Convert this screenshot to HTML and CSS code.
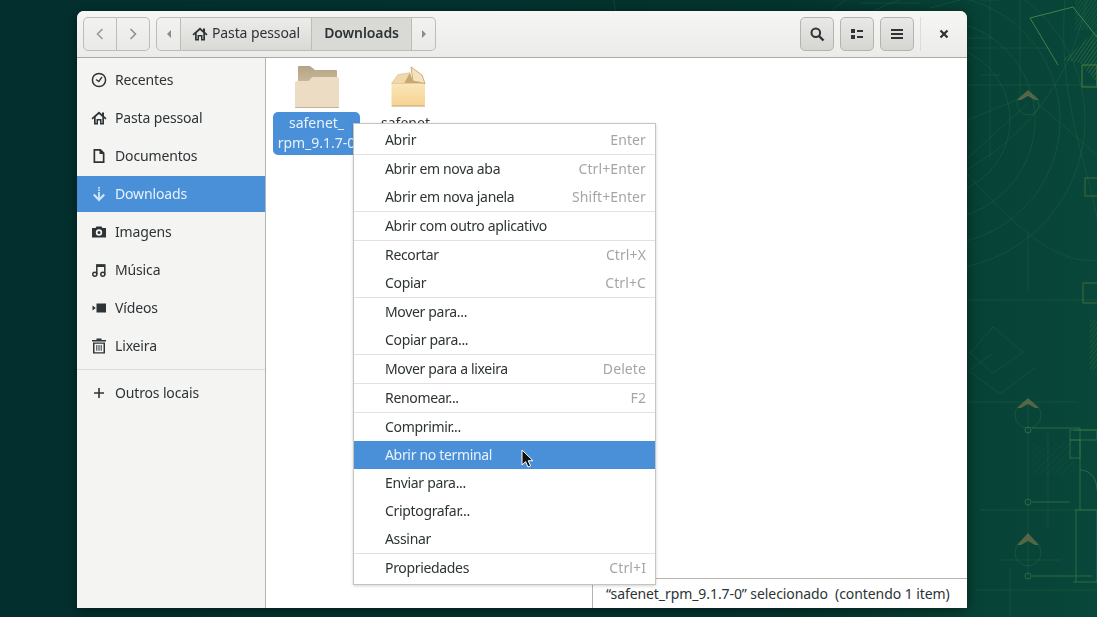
FILE: index.html
```html
<!DOCTYPE html>
<html lang="pt">
<head>
<meta charset="utf-8">
<title>Downloads</title>
<link rel="stylesheet" href="styles.css">
</head>
<body>
<svg class="wallpaper" viewBox="0 0 1097 617" aria-hidden="true">
  <defs>
    <linearGradient id="bg" x1="0" x2="1" y1="0" y2="0">
      <stop offset="0" stop-color="#03302f"/>
      <stop offset=".72" stop-color="#04352f"/>
      <stop offset=".88" stop-color="#074236"/>
      <stop offset="1" stop-color="#09473a"/>
    </linearGradient>
    <linearGradient id="folderBack" x1="0" x2="0" y1="0" y2="1">
      <stop offset="0" stop-color="#b5a484"/>
      <stop offset="1" stop-color="#c9b99b"/>
    </linearGradient>
    <linearGradient id="boxBody" x1="0" x2="0" y1="0" y2="1">
      <stop offset="0" stop-color="#fbe6b8"/>
      <stop offset="1" stop-color="#f6d392"/>
    </linearGradient>
    <pattern id="hatch" width="3" height="3" patternUnits="userSpaceOnUse" patternTransform="rotate(35)">
      <line x1="0" y1="0" x2="0" y2="3" stroke="#5a9a50" stroke-width=".9"/>
    </pattern>
    <pattern id="hatch2" width="5" height="5" patternUnits="userSpaceOnUse" patternTransform="rotate(45)">
      <line x1="0" y1="0" x2="0" y2="5" stroke="#2f6f50" stroke-width=".8"/>
    </pattern>
  </defs>
  <rect width="1097" height="617" fill="url(#bg)"/>
  <g class="blueprint">
    <g fill="none" stroke="#2e7a50" stroke-width=".7" opacity=".4">
      <circle cx="935" cy="120" r="75"/>
      <circle cx="935" cy="120" r="100"/>
      <circle cx="935" cy="120" r="125"/>
      <circle cx="935" cy="120" r="150"/>
      <circle cx="850" cy="-40" r="240"/>
      <path d="M968 48h30M968 38h25M980 75h20M1000 48h50"/>
      <path d="M968 85h130M990 0v160M1020 0v100M968 120l60-25M1028 95l69 60M968 158l60-55"/>
      <path d="M1000 0h-20M930 8l30-8M860 3h60"/>
    </g>
    <g fill="none" stroke="#4f9a50" stroke-width="1" opacity=".75">
      <path d="M1030 18l43-11 24 30M1030 18l28 47"/>
      <path d="M1063 60l34-30v53l-17-20z" fill="url(#hatch)" stroke="none"/>
      <path d="M1082 65h15v22h-15z" stroke="#6c8a3c"/>
    </g>
    <g fill="none" stroke="#2e7a50" stroke-width=".7" opacity=".38">
      <path d="M993 327l30 25-30 21-23-20zM970 370l23-17M1036 367l-36 27-30-22"/>
      <path d="M968 300h129M968 402h110M980 510h117M1028 232v60M1028 400v176"/>
      <path d="M975 590h122M1010 617v-50M1000 560h60M1048 430v100"/>
      <path d="M1065 0c-10 120 40 200 32 240M968 175c50 55 90 90 129 85"/>
    </g>
    <g fill="none" stroke="#4f8d4e" stroke-width=".8" opacity=".65">
      <rect x="1083" y="283" width="20" height="20" stroke="#7d8540"/>
      <rect x="1085" y="178" width="15" height="18" stroke="#7d8540"/>
      <circle cx="1028" cy="430" r="3"/><circle cx="1028" cy="502" r="3"/><circle cx="1028" cy="576" r="3"/>
      <path d="M1032 428h48v82M1032 502h38M1032 576h60M1074 430h23M1080 470c10 0 17 8 17 20M1075 510h22v72h-24M1076 510v72"/>
      <rect x="1070" y="430" width="27" height="10"/>
      <rect x="1070" y="440" width="10" height="18"/>
    </g>
    <rect x="1032" y="443" width="42" height="32" fill="url(#hatch2)" opacity=".35"/>
    <rect x="1075" y="0" width="22" height="30" fill="url(#hatch)" opacity=".4"/>
    <rect x="1090" y="320" width="7" height="50" fill="url(#hatch)" opacity=".45"/>
    <g fill="#8a7a50" opacity=".6">
      <path d="M1017 408l11-10 11 10-4 0-7-4-7 4z"/>
      <path d="M1017 545l11-12 11 12-4 0-7-4-7 4z"/>
      <path d="M1017 100l11-10 11 10-4 0-7-4-7 4z"/>
    </g>
    <g fill="none" stroke="#3d7a4a" stroke-width=".7" opacity=".45">
      <circle cx="1028" cy="415" r="13"/>
      <circle cx="1028" cy="553" r="13"/>
      <circle cx="1028" cy="104" r="11"/>
    </g>
  </g>
</svg>

<main class="window">
  <header class="headerbar">
    <div class="btn-group nav-group">
      <button class="hb-btn nav-btn"><svg viewBox="0 0 16 16" class="ico-16"><path d="M10.500 3L5.500 8l5 5" fill="none" stroke="#9a9a98" stroke-width="1.600"/></svg></button>
      <button class="hb-btn nav-btn"><svg viewBox="0 0 16 16" class="ico-16"><path d="M5.500 3l5 5-5 5" fill="none" stroke="#8f8f8d" stroke-width="1.600"/></svg></button>
    </div>
    <div class="btn-group path-group">
      <button class="hb-btn arrow-btn"><svg viewBox="0 0 16 16" class="ico-16"><path d="M10 4v8L6 8z" fill="#8b8b89"/></svg></button>
      <button class="hb-btn crumb"><svg viewBox="0 0 16 16" class="ico-16"><path d="M8 1.500L.500 8.300l1 1.100L3 8.200V14.500h4V10.500h2v4h4V8.200l1.500 1.200 1-1.100-2.500-2.300V2.500h-2v1.800zM4.700 12.900V6.900L8 3.900l3.300 3v6H10.500V9h-5v3.900z" fill="#2e3436" fill-rule="evenodd"/></svg><span>Pasta pessoal</span></button>
      <button class="hb-btn crumb crumb-active"><span>Downloads</span></button>
      <button class="hb-btn arrow-btn arrow-end"><svg viewBox="0 0 16 16" class="ico-16"><path d="M6 4v8l4-4z" fill="#8b8b89"/></svg></button>
    </div>
    <div class="hb-spacer"></div>
    <button class="hb-btn tool-btn"><svg viewBox="0 0 16 16" class="ico-16"><circle cx="6.800" cy="6.800" r="4.300" fill="none" stroke="#2e3436" stroke-width="2"/><path d="M10 10l4.500 4.500" stroke="#2e3436" stroke-width="2.400"/></svg></button>
    <button class="hb-btn tool-btn"><svg viewBox="0 0 16 16" class="ico-16"><path d="M2 3h4v4H2zM2 9h4v4H2zM8 4h6v2H8zM8 10h6v2H8z" fill="#2e3436"/></svg></button>
    <button class="hb-btn tool-btn"><svg viewBox="0 0 16 16" class="ico-16"><path d="M2 3h12v2H2zM2 7h12v2H2zM2 11h12v2H2z" fill="#2e3436"/></svg></button>
    <div class="hb-sep"></div>
    <button class="close-btn"><svg viewBox="0 0 16 16" class="ico-16"><path d="M4.500 4.500l7 7M11.500 4.500l-7 7" stroke="#2e3436" stroke-width="2.200"/></svg></button>
  </header>

  <div class="body">
    <nav class="sidebar">
      <ul class="places">
        <li class="place"><svg viewBox="0 0 16 16" class="ico-16"><circle cx="8" cy="8" r="6.600" fill="none" stroke="#2e3436" stroke-width="1.500"/><path d="M5 7.500l2.800 2L11 5" fill="none" stroke="#2e3436" stroke-width="1.300"/></svg><span>Recentes</span></li>
        <li class="place"><svg viewBox="0 0 16 16" class="ico-16"><path d="M8 1.500L.500 8.300l1 1.100L3 8.200V14.500h4V10.500h2v4h4V8.200l1.500 1.200 1-1.100-2.500-2.300V2.500h-2v1.800zM4.700 12.900V6.900L8 3.900l3.300 3v6H10.500V9h-5v3.900z" fill="#2e3436" fill-rule="evenodd"/></svg><span>Pasta pessoal</span></li>
        <li class="place"><svg viewBox="0 0 16 16" class="ico-16"><path d="M2.500 1h7.200L13.500 4.800V15h-11zM4.200 2.700v10.600h7.600V6H8.500V2.700z" fill="#2e3436" fill-rule="evenodd"/></svg><span>Documentos</span></li>
        <li class="place place-active"><svg viewBox="0 0 16 16" class="ico-16"><path d="M7.100 1h1.800v1.500H7.100zM7.100 3.500h1.800V5H7.100zM7.100 6h1.800v6.500H7.100z" fill="#d8e6f6"/><path d="M2.800 8.500L8 14l5.200-5.500" fill="none" stroke="#d8e6f6" stroke-width="2"/></svg><span>Downloads</span></li>
        <li class="place"><svg viewBox="0 0 16 16" class="ico-16"><path d="M5.500 2.500h5l1 1.500H15v9.500H1V4h3.500zM8 5.300a3.200 3.200 0 100 6.400 3.200 3.200 0 000-6.400zM8 7a1.500 1.500 0 110 3 1.500 1.500 0 010-3z" fill="#2e3436" fill-rule="evenodd"/></svg><span>Imagens</span></li>
        <li class="place"><svg viewBox="0 0 16 16" class="ico-16"><g fill="none" stroke="#2e3436" stroke-width="1.500"><circle cx="3.800" cy="12.300" r="2"/><circle cx="11.800" cy="12.300" r="2"/><path d="M5.800 12.300V3h8v9.300"/></g><path d="M5.800 2.500h8v2.500h-8z" fill="#2e3436"/></svg><span>Música</span></li>
        <li class="place"><svg viewBox="0 0 16 16" class="ico-16"><path d="M5.500 3.500h9.500v9H5.500zM1.500 5.500l3.300 2.500-3.300 2.500z" fill="#2e3436"/></svg><span>Vídeos</span></li>
        <li class="place"><svg viewBox="0 0 16 16" class="ico-16"><path d="M5.500 .500h5V2H15v1.500H1V2h4.500zM2 4.500h12V15.500H2zM3.500 5.800v8.400h9V5.800zM5.300 7h1v5.800h-1zM7.500 7h1v5.800h-1zM9.700 7h1v5.800h-1z" fill="#2e3436" fill-rule="evenodd"/></svg><span>Lixeira</span></li>
      </ul>
      <div class="sidebar-sep"></div>
      <div class="place"><svg viewBox="0 0 16 16" class="ico-16"><path d="M7.200 3h1.600v4.200H13v1.600H8.800V13H7.200V8.800H3V7.200h4.200z" fill="#2e3436"/></svg><span>Outros locais</span></div>
    </nav>

    <section class="files">
      <article class="file">
        <svg class="file-icon" viewBox="0 0 48 48"><path d="M5 3a1 1 0 011-1h11l5 4h21a1 1 0 011 1v12H5z" fill="url(#folderBack)"/><path d="M4 17h11c2 0 3-4 5-4h24a2 2 0 012 2v27a2 2 0 01-2 2H4a2 2 0 01-2-2V19a2 2 0 012-2z" fill="#ecdcc3"/><path d="M2 43h44v1H2z" fill="#c4b497"/></svg>
        <div class="file-label file-label-sel">safenet_<br>rpm_9.1.7-0</div>
      </article>
      <article class="file">
        <svg class="file-icon file-icon-box" viewBox="0 0 48 48"><path d="M9.500 19.500H43V40a2 2 0 01-2 2H11.500a2 2 0 01-2-2z" fill="url(#boxBody)"/><path d="M9.500 41.500H43V42.500H9.500z" fill="#c2a062"/><path d="M22 19.500L28 8.500l3 8.500 12 2.500z" fill="#c9a76e"/><path d="M9.500 19.500l6.500-9 12-1.800-6 10.800z" fill="#efd8ac" stroke="#cfb27a" stroke-width=".5"/><path d="M29 3l11 8 3 8.500L31 17z" fill="#f5e3bf" stroke="#c09c5c" stroke-width=".8"/></svg>
        <div class="file-label">safenet</div>
      </article>
    </section>
  </div>

  <footer class="status">“safenet_rpm_9.1.7-0” selecionado  (contendo 1 item)</footer>
</main>

<div class="menu" role="menu">
  <div class="mi"><span>Abrir</span><kbd>Enter</kbd></div>
  <hr>
  <div class="mi"><span>Abrir em nova aba</span><kbd>Ctrl+Enter</kbd></div>
  <div class="mi"><span>Abrir em nova janela</span><kbd>Shift+Enter</kbd></div>
  <hr>
  <div class="mi"><span>Abrir com outro aplicativo</span></div>
  <hr>
  <div class="mi"><span>Recortar</span><kbd>Ctrl+X</kbd></div>
  <div class="mi"><span>Copiar</span><kbd>Ctrl+C</kbd></div>
  <hr>
  <div class="mi"><span>Mover para...</span></div>
  <div class="mi"><span>Copiar para...</span></div>
  <hr>
  <div class="mi"><span>Mover para a lixeira</span><kbd>Delete</kbd></div>
  <hr>
  <div class="mi"><span>Renomear...</span><kbd>F2</kbd></div>
  <hr>
  <div class="mi"><span>Comprimir...</span></div>
  <div class="mi mi-active"><span>Abrir no terminal</span></div>
  <div class="mi"><span>Enviar para...</span></div>
  <div class="mi"><span>Criptografar...</span></div>
  <div class="mi"><span>Assinar</span></div>
  <hr>
  <div class="mi"><span>Propriedades</span><kbd>Ctrl+I</kbd></div>
</div>

<svg class="cursor" viewBox="0 0 14 20" aria-hidden="true"><path d="M1 1v15l3.600-3.400 2.400 5.400 2.600-1.100-2.400-5.200H12z" fill="#111" stroke="#fff" stroke-width="1"/></svg>
</body>
</html>
```

FILE: styles.css
```css
* { box-sizing: border-box; }
html, body { margin: 0; height: 100%; overflow: hidden; }
body {
  background: #03302f;
  font-family: "Noto Sans", "Open Sans", sans-serif;
  font-size: 14px;
  color: #2e3436;
}
.wallpaper { position: absolute; left: 0; top: 0; width: 1097px; height: 617px; display: block; }
.blueprint { filter: blur(.35px); }
.ico-16 { width: 16px; height: 16px; flex: none; display: block; }

.window {
  position: absolute;
  left: 77px;
  top: 11px;
  width: 890px;
  height: 597px;
  display: flex;
  flex-direction: column;
  background: #fff;
  border-radius: 7px 7px 0 0;
  box-shadow: 0 2px 14px rgba(0, 0, 0, .45);
}

.headerbar {
  height: 47px;
  flex: none;
  display: flex;
  align-items: center;
  padding: 0 0 1px 6px;
  background: linear-gradient(#f6f6f5, #ebebe9);
  border-bottom: 1px solid #a9a9a6;
  border-radius: 7px 7px 0 0;
}
.btn-group { display: flex; height: 34px; }
.nav-group { width: 67px; }
.path-group { margin-left: 6px; width: 280px; }
.hb-spacer { flex: 1; }
.hb-btn {
  height: 34px;
  padding: 0;
  display: flex;
  align-items: center;
  justify-content: center;
  font: inherit;
  color: #2e3436;
  background: linear-gradient(#f2f2f1, #e9e9e7);
  border: 1px solid #bcbcb8;
  border-left-width: 0;
}
.hb-btn span { margin-bottom: 2px; letter-spacing: -.1px; }
.btn-group .hb-btn:first-child { border-left-width: 1px; border-radius: 5px 0 0 5px; }
.btn-group .hb-btn:last-child { border-radius: 0 5px 5px 0; }
.nav-btn { flex: 1; }
.arrow-btn { width: 25px; }
.arrow-end { width: 24px; }
.crumb { gap: 4px; width: 131px; background: linear-gradient(#ececea, #d9d9d6); }
.crumb-active { width: 100px; font-weight: 600; background: #d9d9d6; }
.tool-btn {
  width: 34px;
  margin-left: 6px;
  border: 1px solid #b3b3af;
  border-radius: 5px;
  background: linear-gradient(#e9e9e7, #d5d5d2);
}
.hb-sep { width: 1px; height: 34px; background: #dcdcd9; margin: 0 14px 0 6px; }
.close-btn {
  width: 18px;
  height: 18px;
  padding: 1px;
  margin-right: 14px;
  background: none;
  border: 0;
}

.body { flex: 1; min-height: 0; display: flex; }
.sidebar {
  width: 189px;
  flex: none;
  padding-top: 4px;
  background: #f4f4f3;
  border-right: 1px solid #b4b4b1;
}
.places { list-style: none; margin: 0; padding: 0; display: flex; flex-direction: column; gap: 2px; }
.place {
  height: 36px;
  display: flex;
  align-items: center;
  gap: 8px;
  padding-left: 14px;
  letter-spacing: -.15px;
}
.place span { margin-bottom: 2px; }
.place-active { background: #4a90d9; color: #e8f1fb; }
.sidebar-sep { height: 1px; background: #dbdbd9; margin-top: 5px; margin-bottom: 5px; }

.files { flex: 1; display: flex; align-items: flex-start; gap: 2px; padding: 6px 0 0 7px; background: #fff; }
.file { width: 87px; display: flex; flex-direction: column; align-items: center; }
.file-icon { width: 48px; height: 48px; display: block; }
.file-label { width: 87px; height: 43px; padding-top: 1px; text-align: center; line-height: 20px; white-space: nowrap; overflow: hidden; }
.file-label-sel { background: #4a90d9; color: #e8f1fb; border-radius: 5px; }

.status {
  position: absolute;
  right: 0;
  bottom: 0;
  width: 375px;
  height: 30px;
  padding: 0 0 1px 13px;
  display: flex;
  align-items: center;
  white-space: pre;
  letter-spacing: -.08px;
  background: #fff;
  border-top: 1px solid #b4b4b1;
  border-left: 1px solid #b4b4b1;
}

.menu {
  position: absolute;
  left: 353px;
  top: 123px;
  width: 303px;
  height: 462px;
  padding: 2px 0;
  background: #fff;
  border: 1px solid #c4c4c1;
  box-shadow: 0 1px 3px rgba(0, 0, 0, .18);
}
.menu hr { height: 1px; margin: 0; border: 0; background: #e2e2e0; }
.mi {
  height: 28px;
  display: flex;
  align-items: center;
  justify-content: space-between;
  padding: 0 9px 2px 31px;
}
.mi span { letter-spacing: -.33px; }
.mi kbd { font: inherit; letter-spacing: .1px; color: #a4a6a6; }
.mi-active { background: #4a90d9; color: #e8f1fb; }

.cursor { position: absolute; left: 521px; top: 449px; width: 14px; height: 20px; }
```
